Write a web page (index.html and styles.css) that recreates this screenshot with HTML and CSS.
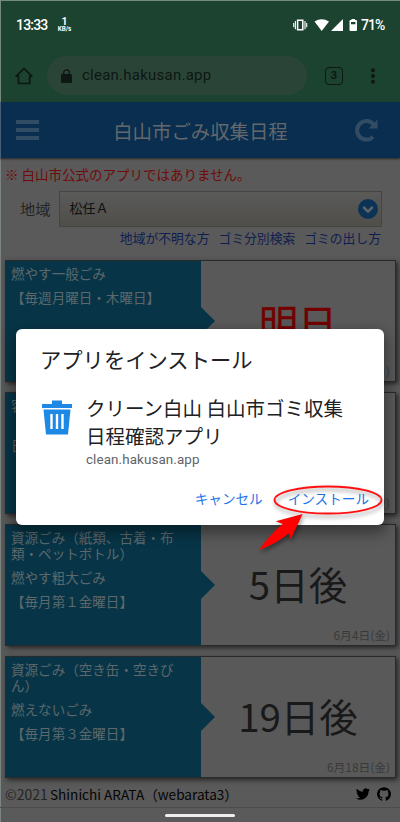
FILE: index.html
```html
<!DOCTYPE html>
<html lang="ja">
<head>
<meta charset="utf-8">
<title>白山市ごみ収集日程</title>
<link rel="stylesheet" href="styles.css">
</head>
<body>
<div class="phone">
  <header class="browser">
    <div class="status">
      <span class="time">13:33</span>
      <span class="speed"><b>1</b><small>KB/s</small></span>
      <svg class="status-icons" width="66" height="16" viewBox="0 0 66 16" fill="#fff">
        <path d="M4.6 3.2h5.2v9.600H4.600z" fill="none" stroke="#fff" stroke-width="1.500"/>
        <path d="M2.400 4v8.200M12 4v8.200M.700 6v4.200M13.700 6v4.200" stroke="#fff" stroke-width="1.100"/>
        <path d="M21.500 4.500Q28.500 0 36 4.500L28.700 14z"/>
        <path d="M50 2v12H38z"/>
        <path fill-rule="evenodd" d="M58.500 2v1H57.500q-1 0-1 1v9q0 1 1 1h5.500q1 0 1-1V4q0-1-1-1h-1V2zM58 5h4.400v2.200H58z"/>
      </svg>
      <span class="battery">71%</span>
    </div>
    <div class="toolbar">
      <svg class="home" width="18" height="18" viewBox="0 0 18 18" fill="none" stroke="#0e1713" stroke-width="1.700" stroke-linejoin="round"><path d="M1.200 9.200 9 1.500l7.800 7.700H14.700V16.500H3.500V9.200z"/></svg>
      <div class="address">
        <svg width="11" height="14" viewBox="0 0 11 14"><path d="M2.700 6V3.600a2.800 2.800 0 0 1 5.600 0V6" fill="none" stroke="#0e1713" stroke-width="1.300"/><rect y="5" width="11" height="9" rx="1.200" fill="#0e1713"/></svg>
        <span>clean.hakusan.app</span>
      </div>
      <span class="tabs">3</span>
      <svg class="dots" width="4" height="16" viewBox="0 0 4 16" fill="#0e1713"><circle cx="2" cy="2.300" r="2"/><circle cx="2" cy="8" r="2"/><circle cx="2" cy="13.700" r="2"/></svg>
    </div>
  </header>
  <nav class="appbar">
    <span class="menu"><i></i><i></i><i></i></span>
    <h1>白山市ごみ収集日程</h1>
    <svg width="23" height="24" viewBox="0 0 23 24"><path d="M18 18.800A9.300 9.300 0 1 1 18.400 6.200" fill="none" stroke="#314c63" stroke-width="4"/><path d="M22.500 1.500V10.500H13.500z" fill="#314c63"/></svg>
  </nav>
  <main>
    <p class="notice">※ 白山市公式のアプリではありません。</p>
    <div class="area">
      <label>地域</label>
      <div class="select"><span>松任Ａ</span>
        <svg width="20" height="20" viewBox="0 0 20 20"><circle cx="10" cy="10" r="10" fill="#0c3355"/><path d="m5.300 8 4.700 4.600L14.700 8" fill="none" stroke="#606466" stroke-width="2.500"/></svg>
      </div>
    </div>
    <div class="links"><a>地域が不明な方</a><a>ゴミ分別検索</a><a>ゴミの出し方</a></div>
    <div class="cards">
      <section class="card">
        <div class="kind"><p>燃やす一般ごみ</p><p>【毎週月曜日・木曜日】</p></div>
        <div class="when"><strong class="soon">明日</strong><span>5月31日(月)</span></div>
      </section>
      <section class="card">
        <div class="kind"><p>容器包装プラスチック</p><p>【毎月第１・第３火曜<br>日】</p></div>
        <div class="when"><span>6月1日(火)</span></div>
      </section>
      <section class="card">
        <div class="kind"><p>資源ごみ（紙類、古着・布類・ペットボトル）</p><p>燃やす粗大ごみ</p><p>【毎月第１金曜日】</p></div>
        <div class="when"><strong>5日後</strong><span>6月4日(金)</span></div>
      </section>
      <section class="card">
        <div class="kind"><p>資源ごみ（空き缶・空きびん）</p><p>燃えないごみ</p><p>【毎月第３金曜日】</p></div>
        <div class="when"><strong>19日後</strong><span>6月18日(金)</span></div>
      </section>
    </div>
  </main>
  <footer>
    <span class="year">©2021</span><b>Shinichi ARATA（webarata3）</b>
    <svg class="twitter" width="14" height="14" viewBox="0 0 24 24"><path d="M23.950 4.570a10 10 0 0 1-2.820.770 4.960 4.960 0 0 0 2.160-2.720c-.950.550-2 .950-3.130 1.180a4.920 4.920 0 0 0-8.380 4.480C7.690 8.090 4.070 6.130 1.640 3.160a4.920 4.920 0 0 0 1.520 6.570 4.900 4.900 0 0 1-2.230-.610v.060a4.920 4.920 0 0 0 3.950 4.830 5 5 0 0 1-2.210.080 4.940 4.940 0 0 0 4.600 3.420A9.870 9.870 0 0 1 0 19.540a14 14 0 0 0 7.550 2.210c9.050 0 14-7.500 14-13.980 0-.210 0-.420-.020-.630a9.940 9.940 0 0 0 2.460-2.550z"/></svg>
    <svg width="14" height="14" viewBox="0 0 24 24"><path d="M12 .300a12 12 0 0 0-3.800 23.380c.600.120.830-.260.830-.570v-2.230c-3.340.720-4.040-1.420-4.040-1.420-.550-1.390-1.330-1.760-1.330-1.760-1.090-.740.080-.730.080-.730 1.200.090 1.840 1.240 1.840 1.240 1.070 1.830 2.810 1.300 3.500 1 .100-.780.420-1.310.760-1.610-2.670-.300-5.470-1.330-5.470-5.930 0-1.310.470-2.380 1.240-3.220-.140-.300-.540-1.520.100-3.180 0 0 1-.320 3.300 1.230a11.500 11.500 0 0 1 6 0c2.280-1.550 3.290-1.230 3.290-1.230.640 1.660.240 2.880.120 3.180a4.650 4.650 0 0 1 1.230 3.220c0 4.610-2.810 5.620-5.480 5.920.420.360.810 1.100.810 2.220v3.290c0 .310.200.690.820.570A12 12 0 0 0 12 .300"/></svg>
  </footer>
  <div class="gesture"><i></i></div>
</div>
<div class="dialog">
  <h2>アプリをインストール</h2>
  <div class="app">
    <svg width="30" height="35" viewBox="0 0 30 35"><path fill="#1e88e5" d="M10 .500h10v3.500h10v4H0V4h10zM1.500 9.500h27L26 34.500H4z"/><path d="M9.500 14v15M15 14v15M20.500 14v15" stroke="#fff" stroke-width="2.400"/></svg>
    <div><h3>クリーン白山 白山市ゴミ収集日程確認アプリ</h3><p>clean.hakusan.app</p></div>
  </div>
  <div class="actions"><span>キャンセル</span><span>インストール</span></div>
</div>
<svg class="callout" width="130" height="80" viewBox="0 0 130 80">
  <ellipse cx="58" cy="20" rx="53.500" ry="13.500" fill="none" stroke="#f11" stroke-width="1.800"/>
  <path fill="#f00" d="M32.700 34 20.700 59 18.700 53.500Q6 64-11 70 1 53 12.700 44L5.700 41.300z"/>
</svg>
</body>
</html>
```

FILE: styles.css
```css
* { box-sizing: border-box; }
body, h1, h2, h3, p { margin: 0; font-weight: 400; }
body {
  width: 400px; height: 822px; overflow: hidden; position: relative;
  font-family: "Noto Sans CJK JP", sans-serif; background: #5a5a5a; color: #252525;
}
svg { display: block; flex: none; overflow: visible; }
.phone { height: 822px; display: flex; flex-direction: column; border-top: 1px solid #76897f; box-shadow: inset 1px 0 #7d8583; }
.browser { height: 101px; background: #1c4230; box-shadow: inset 1px 0 #76897f; }
.status { height: 48px; display: flex; align-items: center; padding: 0 15px 0 16px; color: #fff; font: 500 14px/1 Roboto, sans-serif; }
.time { width: 41px; letter-spacing: -.8px; }
.speed { display: flex; flex-direction: column; align-items: center; width: 15px; }
.speed b { font-size: 10.5px; line-height: 9px; }
.speed small { font-size: 6.3px; font-weight: 700; line-height: 7px; }
.status-icons { margin-left: auto; }
.battery { width: 24px; font-size: 14px; letter-spacing: -.9px; margin-left: 2px; }
.toolbar { height: 53px; display: flex; align-items: center; padding: 0 25px 0 15px; }
.address { display: flex; align-items: center; gap: 10px; width: 260px; height: 39px; margin: 0 18px 0 14px; padding-left: 14px; border-radius: 20px; background: #2a4537; color: #0e1713; font: 15px/1 Roboto, sans-serif; }
.address span { letter-spacing: .24px; }
.tabs { width: 18px; height: 18px; border: 1.7px solid #0e1713; border-radius: 4px; color: #0e1713; font: 700 11px/16px Roboto, sans-serif; text-align: center; }
.dots { margin-left: auto; }
.appbar { height: 56px; display: flex; align-items: center; justify-content: space-between; padding: 0 22px 1px 16px; background: #0a2e50; color: #63686b; box-shadow: inset 1px 0 #456078, 0 1px 2px #272727; }
.menu { display: flex; flex-direction: column; gap: 4px; }
.menu i { width: 23px; height: 4px; background: #314c63; }
.appbar h1 { font-size: 19.4px; line-height: 28px; margin: 2px 0 0 7px; }
.notice { color: #700b0b; font-size: 13.5px; line-height: 20px; margin: 6px 0 0 5px; }
.area { display: flex; align-items: center; gap: 8px; margin: 7px 0 0 20px; }
.area label { font-size: 15.3px; line-height: 24px; padding-bottom: 2px; }
.select { display: flex; align-items: center; justify-content: space-between; width: 323px; height: 36px; padding: 0 3px 0 10px; border: 1px solid #464640; background: linear-gradient(#5a5a59, #4f4e49); color: #101010; font-size: 13px; }
.select span { padding-bottom: 3px; }
.links { display: flex; justify-content: flex-end; gap: 9px; margin: 1px 19px 2px 0; color: #101d50; font-size: 12.8px; line-height: 20px; }
.cards { display: flex; flex-direction: column; gap: 10px; padding: 10px 4px 0 5px; }
.card { display: flex; height: 122px; border: 1px solid #272b2c; background: #595959; box-shadow: 2px 2px 5px #252525; }
.kind { position: relative; width: 195px; padding: 4px 20px 0 5px; background: #073547; color: #5c686c; font-size: 13.55px; line-height: 16px; }
.kind::after { content: ""; position: absolute; left: 100%; top: 46px; border: 14px solid transparent; border-right: 0; border-left-color: #073547; }
.kind p + p { margin-top: 8px; }
.when { position: relative; flex: 1; display: flex; align-items: center; justify-content: center; color: #191919; }
.when strong { font-size: 38.5px; line-height: 50px; font-weight: 400; padding-bottom: 4px; }
.when .soon { color: #720000; font-size: 39px; -webkit-text-stroke: .3px #720000; padding-bottom: 0; }
.when span { position: absolute; right: 5px; bottom: 1px; color: #393939; font-size: 11.8px; line-height: 18px; }
footer { display: flex; align-items: center; height: 29px; padding: 3px 9px 0 5px; font-size: 13.6px; line-height: 20px; }
footer b { color: #050505; font-weight: 400; }
.year { width: 45px; font-size: 14px; }
.twitter { margin-left: auto; margin-right: 7px; }
.gesture { flex: 1; border-top: 1px solid #4c4c4c; display: flex; justify-content: center; padding-top: 6px; }
.gesture i { width: 70px; height: 3px; background: #eee; border-radius: 2px; }
.dialog { position: absolute; left: 16px; top: 329px; width: 368px; height: 196px; padding: 15px 15px 0 24px; border-radius: 6px; background: #fff; color: #202124; box-shadow: 0 6px 14px 2px #0006; }
.dialog h2 { font-size: 21.3px; line-height: 30px; }
.app { display: flex; gap: 14px; margin: 24px 0 0 2px; }
.app svg { margin-top: 2px; }
.app > div { margin-top: -4px; }
.dialog h3 { width: 265px; font-size: 19.5px; line-height: 28px; }
.app p { color: #5f6368; font: 13.4px/18px Roboto, sans-serif; margin-top: 1px; letter-spacing: .1px; }
.actions { display: flex; justify-content: flex-end; gap: 25px; margin-top: 19px; color: #1a73e8; font-size: 13.6px; line-height: 20px; }
.callout { position: absolute; left: 270px; top: 480px; filter: drop-shadow(1px 3px 2px #0006); }
```
